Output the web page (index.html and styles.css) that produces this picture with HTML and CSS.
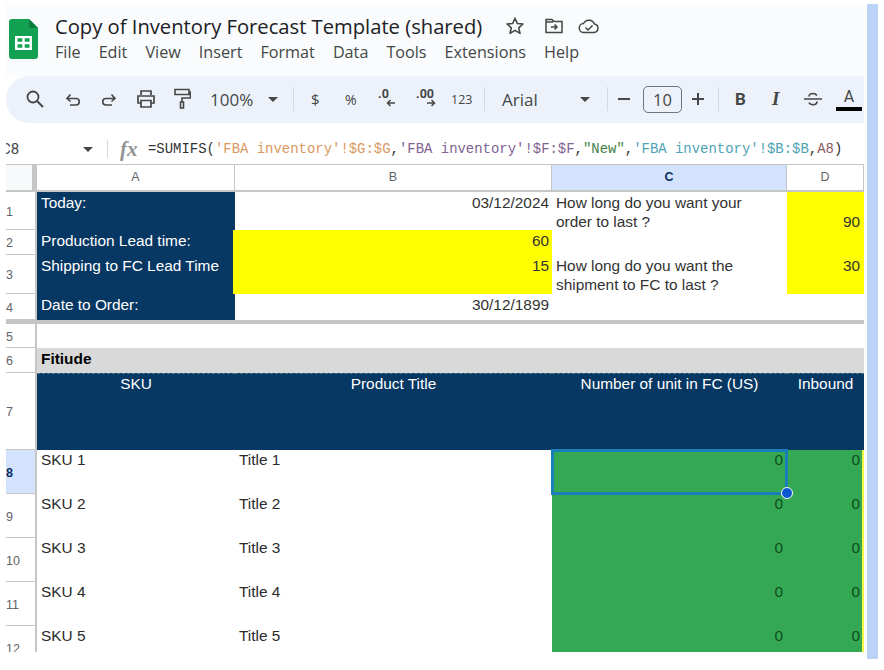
FILE: index.html
```html
<!DOCTYPE html>
<html lang="en">
<head>
<meta charset="utf-8">
<title>Copy of Inventory Forecast Template (shared)</title>
<link rel="stylesheet" href="styles.css">
</head>
<body>
<div class="app">
  <main class="main">
    <header class="head">
      <svg class="logo" viewBox="0 0 29 40" width="29" height="40"><path d="M3 0H20L29 9V37a3 3 0 0 1-3 3H3a3 3 0 0 1-3-3V3a3 3 0 0 1 3-3Z" fill="#12a150"/><path d="M20 0L29 9H22a2 2 0 0 1-2-2Z" fill="#0b7c3c"/><path d="M6 17H23V31H6Z M8.500 19.300V22.800H13.300V19.300Z M15.700 19.300V22.800H20.500V19.300Z M8.500 25.200V28.700H13.300V25.200Z M15.700 25.200V28.700H20.500V25.200Z" fill="#fff" fill-rule="evenodd"/></svg>
      <div class="head-text">
        <div class="title-row">
          <span class="title">Copy of Inventory Forecast Template (shared)</span>
          <svg class="ti ti-star" width="20" height="20" viewBox="0 0 20 20"><path d="M10 2.200l2.300 5.300 5.700.5-4.300 3.800 1.300 5.600-5-3-5 3 1.300-5.600L2 8l5.700-.5Z" fill="none" stroke="#444746" stroke-width="1.600" stroke-linejoin="round"/></svg>
          <svg class="ti" width="20" height="18" viewBox="0 0 20 18"><path d="M2 15.500V2.500H8l2 2h8v11Z M2 5H9" fill="none" stroke="#444746" stroke-width="1.500"/><path d="M7 10h6M10.500 7.500L13 10l-2.500 2.500" fill="none" stroke="#444746" stroke-width="1.500"/></svg>
          <svg class="ti" width="22" height="18" viewBox="0 0 22 18"><path d="M6 15.500a4.500 4.500 0 0 1-.5-9A6 6 0 0 1 16.500 7a4.300 4.300 0 0 1-.5 8.500Z" fill="none" stroke="#444746" stroke-width="1.500"/><path d="M7.500 10.500l2.500 2.500 4.500-4.500" fill="none" stroke="#444746" stroke-width="1.500"/></svg>
        </div>
        <nav class="menu">
          <span>File</span><span>Edit</span><span>View</span><span>Insert</span><span>Format</span><span>Data</span><span>Tools</span><span>Extensions</span><span>Help</span>
        </nav>
      </div>
    </header>

    <div class="toolbar">
      <svg class="i i-search" width="20" height="20" viewBox="0 0 20 20"><circle cx="8" cy="8" r="5.500" fill="none" stroke="#444746" stroke-width="1.800"/><path d="M12 12l6 6" stroke="#444746" stroke-width="1.900"/></svg>
      <svg class="i i-undo" width="18" height="18" viewBox="0 0 18 18"><path d="M3 9.500h9a3 3 0 0 1 0 6.500H6M6.500 5.500L3 9.500l3.500 3" transform="translate(0 -1)" fill="none" stroke="#444746" stroke-width="1.600"/></svg>
      <svg class="i i-redo" width="18" height="18" viewBox="0 0 18 18"><path d="M15 9.500H6a3 3 0 0 0 0 6.500h6M11.500 5.500l3.500 4-3.500 3" transform="translate(0 -1)" fill="none" stroke="#444746" stroke-width="1.600"/></svg>
      <svg class="i i-print" width="20" height="18" viewBox="0 0 20 18"><path d="M5 5V1h10v4M5 13H2V6h16v7h-3M5 10.500h10V17H5Z" fill="none" stroke="#444746" stroke-width="1.700"/></svg>
      <svg class="i i-paint" width="18" height="22" viewBox="0 0 18 22"><path d="M2 1.500h14v5H2ZM16 4h1.500V10H9V14M7.500 14h3v6h-3Z" fill="none" stroke="#444746" stroke-width="1.600"/></svg>
      <span class="zoom">100%</span>
      <span class="caret c1"></span>
      <span class="sep s1"></span>
      <span class="sym dollar">$</span>
      <span class="sym pct">%</span>
      <span class="dec d1">.0<svg width="10" height="8" viewBox="0 0 10 8"><path d="M9 4H2M4.500 1L1.500 4l3 3" fill="none" stroke="#444746" stroke-width="1.500"/></svg></span>
      <span class="dec d2">.00<svg width="10" height="8" viewBox="0 0 10 8"><path d="M1 4h7M5.500 1l3 3-3 3" fill="none" stroke="#444746" stroke-width="1.500"/></svg></span>
      <span class="num">123</span>
      <span class="sep s2"></span>
      <span class="font">Arial</span>
      <span class="caret c2"></span>
      <span class="sep s3"></span>
      <span class="minus"></span>
      <span class="size">10</span>
      <span class="plus"></span>
      <span class="sep s4"></span>
      <span class="bold">B</span>
      <span class="ital">I</span>
      <svg class="i i-strike" width="20" height="18" viewBox="0 0 20 18"><path d="M1 9h18M6 6.500C6 4.500 7.800 3.500 10 3.500c1.800 0 3.200.7 3.900 2M14 11.500c0 2-1.800 3.200-4 3.200s-3.400-.8-4-2.200" fill="none" stroke="#444746" stroke-width="1.600"/></svg>
      <span class="color">A</span>
    </div>

    <div class="formula">
      <span class="ref">C8</span>
      <span class="caret c3"></span>
      <span class="sep s5"></span>
      <span class="fx">fx</span>
      <code class="expr">=SUMIFS(<b class="f1">'FBA inventory'!$G:$G</b>,<b class="f2">'FBA inventory'!$F:$F</b>,<b class="f3">"New"</b>,<b class="f4">'FBA inventory'!$B:$B</b>,<b class="f5">A8</b>)</code>
    </div>

    <section class="sheet">
      <div class="corner"></div>
      <div class="ch">A</div><div class="ch">B</div><div class="ch ch-on">C</div><div class="ch ch-d">D</div>

      <div class="rh">1</div>
      <div class="c navy">Today:</div>
      <div class="c r b">03/12/2024</div>
      <div class="c wrap">How long do you want your order to last ?</div>
      <div class="c yellow r bottom">90</div>

      <div class="rh">2</div>
      <div class="c navy">Production Lead time:</div>
      <div class="c yellow r b wide">60</div>
      <div class="c"></div>
      <div class="c yellow"></div>

      <div class="rh">3</div>
      <div class="c navy">Shipping to FC Lead Time</div>
      <div class="c yellow r b wide">15</div>
      <div class="c wrap">How long do you want the shipment to FC to last ?</div>
      <div class="c yellow r">30</div>

      <div class="rh">4</div>
      <div class="c navy">Date to Order:</div>
      <div class="c r b">30/12/1899</div>
      <div class="c"></div>
      <div class="c"></div>

      <div class="freeze"></div>

      <div class="rh">5</div>
      <div class="c"></div><div class="c"></div><div class="c"></div><div class="c"></div>

      <div class="rh">6</div>
      <div class="c grey">Fitiude</div><div class="c grey"></div><div class="c grey"></div><div class="c grey"></div>

      <div class="rh">7</div>
      <div class="c head-c">SKU</div>
      <div class="c head-c">Product Title</div>
      <div class="c head-c">Number of unit in FC (US)</div>
      <div class="c head-c">Inbound</div>

      <div class="rh rh-on">8</div>
      <div class="c dark">SKU 1</div>
      <div class="c dark">Title 1</div>
      <div class="c green r sel">0<span class="handle"></span></div>
      <div class="c green r last">0</div>

      <div class="rh">9</div>
      <div class="c dark">SKU 2</div>
      <div class="c dark">Title 2</div>
      <div class="c green r">0</div>
      <div class="c green r last">0</div>

      <div class="rh">10</div>
      <div class="c dark">SKU 3</div>
      <div class="c dark">Title 3</div>
      <div class="c green r">0</div>
      <div class="c green r last">0</div>

      <div class="rh">11</div>
      <div class="c dark">SKU 4</div>
      <div class="c dark">Title 4</div>
      <div class="c green r">0</div>
      <div class="c green r last">0</div>

      <div class="rh rh-end">12</div>
      <div class="c dark">SKU 5</div>
      <div class="c dark">Title 5</div>
      <div class="c green r">0</div>
      <div class="c green r last">0</div>
    </section>
  </main>
  <div class="scroll"></div>
</div>
</body>
</html>
```
FILE: styles.css
```css
* { box-sizing: border-box; }
html, body { margin: 0; height: 100%; background: #fff; overflow: hidden; }
body { font-family: "Liberation Sans", Arial, sans-serif; color: #333; }

.app { display: flex; padding: 4px 6px 0 6px; height: 660px; gap: 3px; }
.main { width: 858px; flex: none; display: flex; flex-direction: column; }
.scroll { width: 11px; background: #bcd3f8; height: 655px; }

.head { height: 72px; background: #f9fbfd; display: flex; padding: 15px 0 0 3px; gap: 17px; flex: none; }
.logo { flex: none; }
.head-text { display: flex; flex-direction: column; }
.title-row { display: flex; align-items: center; height: 22px; margin-top: -4px; }
.title { font-family: "Open Sans", sans-serif; font-size: 20.200px; color: #202124; width: 450px; white-space: nowrap; }
.ti { flex: none; margin-right: 14px; }
.ti-star { margin-right: 19px; }
.menu { display: flex; gap: 18px; margin-top: 5px; font-family: "Open Sans", sans-serif; font-size: 16.200px; color: #444746; line-height: 20px; }

.toolbar { height: 47px; background: #edf2fa; border-radius: 23px 0 0 23px; display: flex; align-items: center; flex: none; color: #444746; padding-bottom: 1px; }
.i { flex: none; }
.i-search { margin-left: 19px; }
.i-undo { margin-left: 19px; }
.i-redo { margin-left: 18px; }
.i-print { margin-left: 18px; }
.i-paint { margin-left: 17px; }
.zoom { font-family: "Open Sans", sans-serif; font-size: 17px; margin-left: 19px; width: 50px; flex: none; }
.caret { width: 0; height: 0; border-left: 5px solid transparent; border-right: 5px solid transparent; border-top: 5px solid #444746; flex: none; }
.c1 { margin-left: 8px; }
.sep { width: 1px; height: 24px; background: #d5d9dd; flex: none; }
.s1 { margin-left: 15px; }
.sym { font-family: "Open Sans", sans-serif; font-size: 15px; flex: none; }
.dollar { margin-left: 17px; width: 9px; }
.pct { margin-left: 25px; width: 12px; font-size: 14px; }
.dec { font-family: "Roboto", sans-serif; font-size: 12.500px; font-weight: 700; position: relative; top: -2px; display: inline-flex; flex-direction: column; align-items: flex-start; line-height: 12px; flex: none; }
.dec svg { margin-top: -1px; align-self: flex-end; }
.d1 { margin-left: 21px; width: 18px; }
.d2 { margin-left: 20px; width: 20px; }
.num { font-family: "Open Sans", sans-serif; font-size: 12.500px; margin-left: 15px; width: 21px; flex: none; white-space: nowrap; }
.s2 { margin-left: 12px; }
.font { font-family: "Open Sans", sans-serif; font-size: 17px; margin-left: 17px; width: 74px; flex: none; }
.c2 { margin-left: 4px; }
.s3 { margin-left: 17px; }
.minus { width: 12px; height: 2px; background: #444746; margin-left: 10px; flex: none; }
.size { width: 39px; height: 27px; border: 1px solid #70757a; border-radius: 5px; margin-left: 13px; font-family: "Open Sans", sans-serif; font-size: 16.500px; text-align: center; line-height: 25px; flex: none; }
.plus { width: 12px; height: 12px; margin-left: 10px; flex: none; background: linear-gradient(#444746, #444746) center / 12px 2px no-repeat, linear-gradient(#444746, #444746) center / 2px 12px no-repeat; }
.s4 { margin-left: 14px; }
.bold { font-family: "Roboto", sans-serif; font-weight: 700; font-size: 17px; margin-left: 16px; width: 11px; flex: none; }
.ital { font-family: "Liberation Serif", serif; font-weight: 700; font-style: italic; font-size: 19px; margin-left: 26px; width: 7px; flex: none; }
.i-strike { margin-left: 24px; }
.color { width: 26px; margin-left: 13px; text-align: center; font-family: "Roboto", sans-serif; font-size: 16px; line-height: 20px; border-bottom: 4px solid #000; height: 24px; flex: none; }

.formula { height: 41px; display: flex; align-items: center; flex: none; padding-top: 11px; overflow: hidden; }
.ref { width: 82px; font-family: "Roboto", sans-serif; font-size: 15px; color: #444746; margin-left: -5px; flex: none; }
.c3 { margin-left: 0; }
.s5 { margin-left: 14px; height: 18px; }
.fx { font-family: "Liberation Serif", serif; font-style: italic; font-weight: 700; font-size: 21px; color: #8f9396; margin-left: 12px; width: 28px; flex: none; }
.expr { font-family: "Liberation Mono", monospace; font-size: 13.940px; color: #333; white-space: nowrap; }
.expr b { font-weight: 400; }
.f1 { color: #d9985f; }
.f2 { color: #7f6193; }
.f3 { color: #3f7f47; }
.f4 { color: #4ea3b5; }
.f5 { color: #8d5a60; }

.sheet { display: grid; grid-template-columns: 31px 198px 317px 235px 77px; grid-template-rows: 27px 38px 25px 39px 26px 4px 24px 25px 77px 44px 44px 44px 44px 26px; font-size: 15.400px; line-height: 19px; border-top: 1px solid #c4c7c5; flex: none; overflow: hidden; }
.corner { background: linear-gradient(90deg, #f8f9fa 26px, #c4c7c5 26px); border-bottom: 2px solid #c4c7c5; }
.ch { background: #fff; border-right: 1px solid #c4c7c5; border-bottom: 2px solid #c4c7c5; font-size: 12.500px; text-align: center; line-height: 25px; color: #5f6368; }
.ch-on { background: #d3e3fd; color: #0b2d5e; font-weight: 700; }
.ch-d { border-right: 1px solid #c4c7c5; }
.rh { border-right: 2px solid #c4c7c5; border-bottom: 1px solid #c4c7c5; font-size: 12.500px; color: #5f6368; display: flex; align-items: center; padding-top: 3px; }
.rh-end { border-bottom: 0; align-items: flex-start; padding-top: 14px; }
.rh-on { background: #d3e3fd; color: #0b2d5e; font-weight: 700; }
.c { padding: 1px 4px 0 4px; min-width: 0; position: relative; }
.r { text-align: right; }
.b { padding-right: 3px; }
.wrap { padding-right: 30px; }
.wide { margin-left: -2px; }
.bottom { padding-top: 20px; }
.navy { background: #073763; color: #fff; }
.yellow { background: #ff0; }
.grey { background: #d9d9d9; color: #000; font-weight: 700; white-space: nowrap; }
.head-c { background: #073763; color: #fff; text-align: center; border-top: 1px dashed #3d7a8c; padding-top: 0; }
.dark { color: #2b2b2b; padding-top: 0; }
.green { background: #34a853; color: #0d4f20; padding-top: 0; }
.last { border-right: 2px solid #f2f542; padding-right: 2px; }
.sel { box-shadow: inset 0 0 0 2px #1a7fb8, 0 0 0 1px #1a7fb8; z-index: 1; }
.freeze { grid-column: 1 / -1; background: #c4c4c4; }
.handle { position: absolute; right: -6px; bottom: -5px; width: 12px; height: 12px; border-radius: 50%; background: #0b57d0; border: 1px solid #fff; z-index: 2; }
```
